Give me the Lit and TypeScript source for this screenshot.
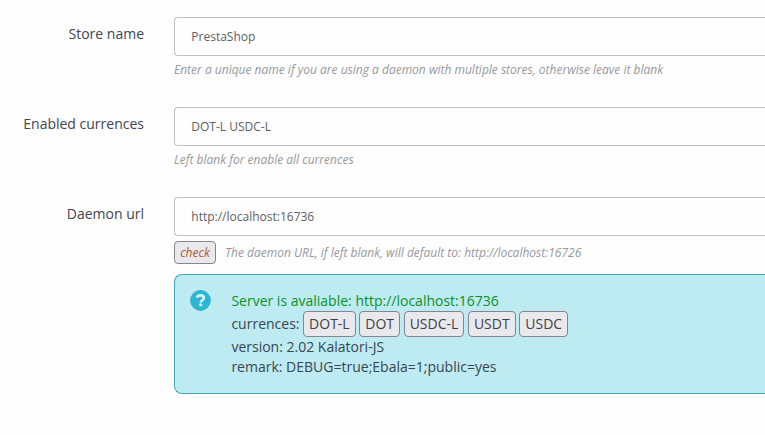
import { LitElement, html, css } from "lit";
import { customElement, property } from "lit/decorators.js";

@customElement("form-row")
class FormRow extends LitElement {
  @property() label = "";
  @property() value = "";

  static styles = css`
    :host { display: flex; height: 90px; }
    .label {
      box-sizing: border-box;
      width: 144px;
      margin-right: 30px;
      padding-top: 7px;
      text-align: right;
      font-size: 14px;
      line-height: 20px;
      color: #414550;
      white-space: nowrap;
      flex: none;
    }
    .main { flex: 1; min-width: 0; }
    .field {
      box-sizing: border-box;
      height: 39px;
      border: 1px solid #b9c3c7;
      border-right: 0;
      border-radius: 4px 0 0 4px;
      padding: 0 16.3px;
      font-size: 12px;
      line-height: 38px;
      color: #5f6062;
    }
  `;

  render() {
    return html`
      <div class="label">${this.label}</div>
      <div class="main">
        <div class="field">${this.value}</div>
        <slot></slot>
      </div>
    `;
  }
}

@customElement("app-root")
class AppRoot extends LitElement {
  static styles = css`
    :host {
      display: block;
      box-sizing: border-box;
      height: 435px;
      padding-top: 17px;
      overflow: hidden;
      background: #fefefe;
      font-family: "Open Sans", sans-serif;
    }
    .help {
      margin-top: 5px;
      font-size: 12px;
      line-height: 18px;
      font-style: italic;
      color: #97999c;
      white-space: nowrap;
    }
    .help.actions {
      display: flex;
      align-items: center;
      gap: 9px;
      height: 23px;
    }
    .check {
      box-sizing: border-box;
      width: 42px;
      height: 23px;
      border: 1px solid #85858f;
      border-radius: 4px;
      background: #e9e9ed;
      color: #b05a30;
      line-height: 21px;
      text-align: center;
    }
    .alert {
      box-sizing: border-box;
      display: flex;
      height: 120px;
      margin: -13px 0 0 174px;
      padding: 16px 0 16px 15px;
      border: 1px solid #3fa9bf;
      border-right: 0;
      border-radius: 8px 0 0 8px;
      background: #beeaf2;
      color: #36474f;
      font-size: 14px;
      line-height: 20px;
      white-space: nowrap;
    }
    .icon { width: 21px; height: 21px; margin: -1px 20.4px 0 0; flex: none; }
    .ok { color: #0a9228; }
    .currencies { display: flex; height: 26px; align-items: center; }
    .chip {
      box-sizing: border-box;
      height: 26px;
      margin-left: 3.6px;
      padding: 0 5px;
      border: 1px solid #85858f;
      border-radius: 4px;
      background: #e9e9ed;
      color: #414047;
      line-height: 24px;
    }
  `;

  private currencies = ["DOT-L", "DOT", "USDC-L", "USDT", "USDC"];

  render() {
    return html`
      <form-row label="Store name" value="PrestaShop">
        <div class="help">Enter a unique name if you are using a daemon with multiple stores, otherwise leave it blank</div>
      </form-row>
      <form-row label="Enabled currences" value="DOT-L USDC-L">
        <div class="help">Left blank for enable all currences</div>
      </form-row>
      <form-row label="Daemon url" value="http://localhost:16736">
        <div class="help actions">
          <span class="check">check</span>
          <span>The daemon URL, if left blank, will default to: http://localhost:16726</span>
        </div>
      </form-row>
      <div class="alert">
        <svg class="icon" viewBox="0 0 21 21">
          <circle cx="10.5" cy="10.5" r="10.4" fill="#2cb6d2" />
          <path d="M7 7.6C7.6 6 8.8 5.3 10.4 5.3c2 0 3.4 1.1 3.4 2.8 0 2.3-3 2-3 4.3" fill="none" stroke="#d9f4f8" stroke-width="2.7" />
          <rect x="9.3" y="13.6" width="2.9" height="2.7" rx="0.6" fill="#d9f4f8" />
        </svg>
        <div>
          <div class="ok">Server is avaliable: http://localhost:16736</div>
          <div class="currencies">
            <span>currences:</span>${this.currencies.map((c) => html`<span class="chip">${c}</span>`)}
          </div>
          <div>version: 2.02 Kalatori-JS</div>
          <div>remark: DEBUG=true;Ebala=1;public=yes</div>
        </div>
      </div>
    `;
  }
}
